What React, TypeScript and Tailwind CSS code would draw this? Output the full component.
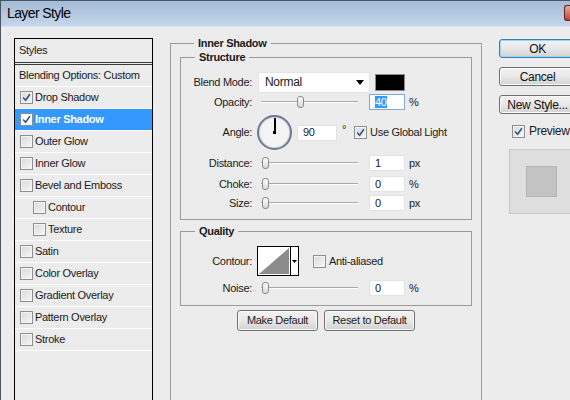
import React from 'react';

const font = { fontFamily: '"Liberation Sans", Arial, sans-serif' };

function Check({ checked, light }: { checked?: boolean; light?: boolean }) {
  return (
    <span
      className={`flex h-[13px] w-[13px] shrink-0 items-center justify-center border border-[#8e8f8f] ${
        light ? 'bg-white' : 'bg-gradient-to-br from-[#d9d9d9] to-[#f7f7f7]'
      }`}
    >
      <span className="flex h-[11px] w-[11px] items-center justify-center border border-[#f4f4f4]">
        {checked && (
          <svg width="9" height="9" viewBox="0 0 9 9">
            <path d="M1.2 4.6 L3.6 7.2 L7.9 1.2" stroke="#2c4f91" strokeWidth="1.5" fill="none" />
          </svg>
        )}
      </span>
    </span>
  );
}

function Slider({ thumb }: { thumb: 'mid' | 'left' }) {
  return (
    <div className="relative ml-[9px] h-[14px] w-[97px] shrink-0">
      <div className="absolute left-0 right-0 top-[6px] h-[2px] border-t border-[#a8a8a8] bg-white" />
      <div
        className={`absolute top-[1px] h-[12px] w-[7px] rounded-[3px] border border-[#8a8a8a] bg-gradient-to-b from-white to-[#d8d8d8] ${
          thumb === 'mid' ? 'left-[36px]' : 'left-[1px]'
        }`}
      />
    </div>
  );
}

function Field({ value, selected, className }: { value: string; selected?: boolean; className: string }) {
  return (
    <div
      className={`flex h-[16px] shrink-0 items-center bg-white pl-[5px] ${
        selected ? 'border border-[#7fa9d8]' : 'border border-[#e2e2e2]'
      } ${className}`}
    >
      {selected ? <span className="bg-[#3399ff] leading-[12px] text-white">{value}</span> : <span>{value}</span>}
    </div>
  );
}

function Label({ children }: { children: React.ReactNode }) {
  return <div className="w-[71px] shrink-0 text-right">{children}</div>;
}

function SliderRow({ label, value, unit, thumb, selected, className }: {
  label: string; value: string; unit: string; thumb: 'mid' | 'left'; selected?: boolean; className: string;
}) {
  return (
    <div className={`flex h-[18px] items-center ${className}`}>
      <Label>{label}</Label>
      <Slider thumb={thumb} />
      <Field value={value} selected={selected} className="ml-[11px] w-[36px]" />
      <span className="ml-[4px]">{unit}</span>
    </div>
  );
}

function Legend({ children }: { children: React.ReactNode }) {
  return <legend className="ml-[14px] px-[4px] text-[11px] font-bold leading-[13px]">{children}</legend>;
}

function ListRow({ label, checked, indent, active }: { label: string; checked?: boolean; indent?: boolean; active?: boolean }) {
  return (
    <div
      className={`flex h-[22px] items-center gap-[2px] border-b border-white ${indent ? 'pl-[18px]' : 'pl-[5px]'} ${
        active ? 'bg-[#3399ff] font-bold text-white' : ''
      }`}
    >
      <Check checked={checked} light={active} />
      <span>{label}</span>
    </div>
  );
}

function WinButton({ children, primary, className }: { children: React.ReactNode; primary?: boolean; className: string }) {
  return (
    <div
      className={`flex h-[19px] w-[77px] items-center justify-center rounded-[3px] border bg-gradient-to-b from-[#f3f3f3] via-[#e8e8e8] to-[#d2d2d2] text-[12px] tracking-[-0.3px] text-[#111] ${
        primary ? 'border-[#3c7fb1] shadow-[inset_0_0_0_1px_#9ed6f2]' : 'border-[#707070] shadow-[inset_0_0_0_1px_#fafafa]'
      } ${className}`}
    >
      {children}
    </div>
  );
}

export default function App() {
  return (
    <div
      style={font}
      className="relative h-[400px] w-[570px] overflow-hidden border-l border-t border-[#4a5563] bg-[#ececec] text-[11px] tracking-[-0.3px] text-[#1a1a1a]"
    >
      {/* title bar */}
      <div className="flex h-[26px] items-center border-b border-[#d7e1ec] bg-gradient-to-b from-[#a3bbd6] to-[#c4d6ea] pl-[6px]">
        <span className="text-[14px] tracking-[-0.6px] text-black">Layer Style</span>
        <div className="ml-auto mt-[4px] h-[16px] w-[6px] self-start rounded-l-[3px] border border-r-0 border-[#5c2a22] bg-gradient-to-b from-[#e9a99a] to-[#c2422c]" />
      </div>

      <div className="flex">
        {/* styles list */}
        <div className="ml-[13px] mt-[11px] h-[380px] w-[139px] shrink-0 border border-black">
          <div className="flex h-[23px] items-center pl-[4px]">Styles</div>
          <div className="h-[3px] border-y border-[#3b3b3b]" />
          <div className="flex h-[22px] items-center border-b border-white pl-[4px]">Blending Options: Custom</div>
          <ListRow label="Drop Shadow" checked />
          <ListRow label="Inner Shadow" checked active />
          <ListRow label="Outer Glow" />
          <ListRow label="Inner Glow" />
          <ListRow label="Bevel and Emboss" />
          <ListRow label="Contour" indent />
          <ListRow label="Texture" indent />
          <ListRow label="Satin" />
          <ListRow label="Color Overlay" />
          <ListRow label="Gradient Overlay" />
          <ListRow label="Pattern Overlay" />
          <ListRow label="Stroke" />
        </div>

        {/* main settings */}
        <fieldset className="ml-[17px] mt-[10px] h-[400px] w-[312px] shrink-0 border border-[#9c9c9c] px-[9px]">
          <Legend>Inner Shadow</Legend>
          <fieldset className="mt-[1px] border border-[#9c9c9c] pb-[7px]">
            <Legend>Structure</Legend>
            <div className="mt-[7px] flex h-[22px] items-center">
              <Label>Blend Mode:</Label>
              <div className="ml-[6px] flex h-[21px] w-[112px] shrink-0 items-center justify-between border border-[#e4e4e4] bg-white pl-[6px] pr-[5px] text-[12px]">
                <span>Normal</span>
                <svg width="8" height="5" viewBox="0 0 8 5"><path d="M0 0 H8 L4 5 Z" fill="#000" /></svg>
              </div>
              <div className="ml-[5px] h-[17px] w-[30px] shrink-0 border border-[#8a8a8a] bg-black" />
            </div>
            <SliderRow label="Opacity:" value="40" unit="%" thumb="mid" selected className="" />
            <div className="mt-[3px] flex h-[37px] items-center">
              <Label>Angle:</Label>
              <div className="relative ml-[5px] h-[35px] w-[35px] shrink-0 rounded-full border-2 border-[#6d7a91] bg-[#f4f4f4] shadow-[inset_0_0_2px_#9aa6bb]">
                <div className="absolute left-[14.5px] top-[1px] h-[15px] w-[2px] bg-black" />
                <div className="absolute left-[14px] top-[14px] h-[3px] w-[3px] bg-black" />
              </div>
              <Field value="90" className="ml-[5px] w-[40px]" />
              <span className="-mt-[6px] ml-[5px]">°</span>
              <div className="ml-[8px]"><Check checked /></div>
              <span className="ml-[3px]">Use Global Light</span>
            </div>
            <SliderRow label="Distance:" value="1" unit="px" thumb="left" className="mt-[3px]" />
            <SliderRow label="Choke:" value="0" unit="%" thumb="left" className="mt-[3px]" />
            <SliderRow label="Size:" value="0" unit="px" thumb="left" className="mt-[1px]" />
          </fieldset>

          <fieldset className="mt-[5px] border border-[#9c9c9c] pb-[8px]">
            <Legend>Quality</Legend>
            <div className="mt-[8px] flex h-[30px] items-center">
              <Label>Contour:</Label>
              <div className="ml-[5px] flex h-[30px] w-[42px] shrink-0 border border-black bg-white">
                <svg width="32" height="28" viewBox="0 0 32 28" className="shrink-0">
                  <path d="M1 27 L31 1 L31 27 Z" fill="#8c8c8c" />
                </svg>
                <div className="flex flex-1 items-center justify-center border-l border-black">
                  <svg width="5" height="3" viewBox="0 0 5 3"><path d="M0 0 H5 L2.5 3 Z" fill="#000" /></svg>
                </div>
              </div>
              <div className="ml-[14px]"><Check /></div>
              <span className="ml-[3px]">Anti-aliased</span>
            </div>
            <SliderRow label="Noise:" value="0" unit="%" thumb="left" className="mt-[3px]" />
          </fieldset>

          <div className="mt-[4px] flex justify-center gap-[6px]">
            <div className="flex h-[21px] w-[81px] items-center justify-center rounded-[3px] border border-[#707070] bg-gradient-to-b from-[#f3f3f3] via-[#e8e8e8] to-[#d2d2d2] shadow-[inset_0_0_0_1px_#fafafa]">Make Default</div>
            <div className="flex h-[21px] w-[91px] items-center justify-center rounded-[3px] border border-[#707070] bg-gradient-to-b from-[#f3f3f3] via-[#e8e8e8] to-[#d2d2d2] shadow-[inset_0_0_0_1px_#fafafa]">Reset to Default</div>
          </div>
        </fieldset>

        {/* right column */}
        <div className="ml-[17px] mt-[12px] w-[77px] shrink-0">
          <WinButton primary className="">OK</WinButton>
          <WinButton className="mt-[9px]">Cancel</WinButton>
          <WinButton className="mt-[9px]">New Style...</WinButton>
          <div className="mt-[8px] flex items-center pl-[13px] text-[12px]">
            <Check checked />
            <span className="ml-[4px]">Preview</span>
          </div>
          <div className="ml-[10px] mt-[9px] h-[65px] w-[70px] border border-[#c8c8c8] bg-[#dedede] pl-[16px] pt-[16px]">
            <div className="h-[31px] w-[31px] border border-[#b4b4b4] bg-[#c3c3c3]" />
          </div>
        </div>
      </div>
    </div>
  );
}
